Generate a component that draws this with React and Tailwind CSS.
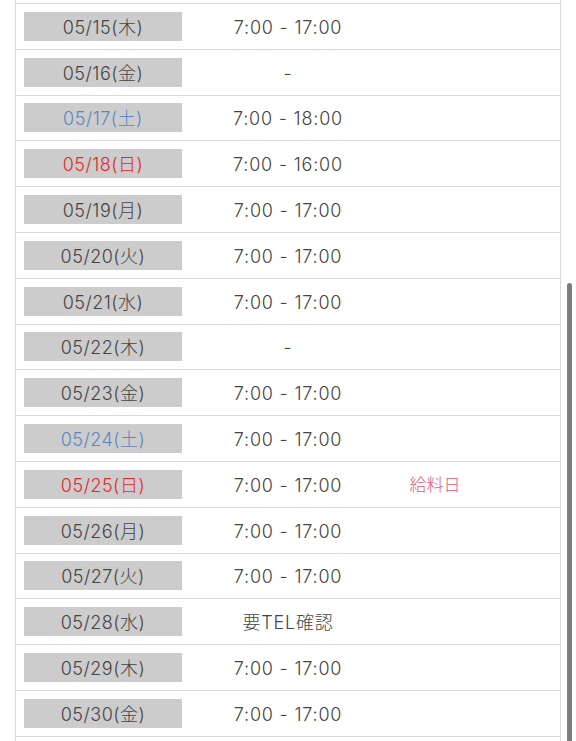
import React from "react";

const rows = [
  { d: "05/15(木)", t: "7:00 - 17:00" },
  { d: "05/16(金)", t: "-" },
  { d: "05/17(土)", t: "7:00 - 18:00", c: "blue" },
  { d: "05/18(日)", t: "7:00 - 16:00", c: "red" },
  { d: "05/19(月)", t: "7:00 - 17:00" },
  { d: "05/20(火)", t: "7:00 - 17:00" },
  { d: "05/21(水)", t: "7:00 - 17:00" },
  { d: "05/22(木)", t: "-" },
  { d: "05/23(金)", t: "7:00 - 17:00" },
  { d: "05/24(土)", t: "7:00 - 17:00", c: "blue" },
  { d: "05/25(日)", t: "7:00 - 17:00", c: "red", n: "給料日" },
  { d: "05/26(月)", t: "7:00 - 17:00" },
  { d: "05/27(火)", t: "7:00 - 17:00" },
  { d: "05/28(水)", t: "要TEL確認" },
  { d: "05/29(木)", t: "7:00 - 17:00" },
  { d: "05/30(金)", t: "7:00 - 17:00" },
];

export default function App() {
  return (
    <div
      className="relative w-[576px] h-[741px] overflow-hidden bg-white text-[#444444]"
      style={{ fontFamily: 'Inter, "Noto Sans CJK JP", sans-serif' }}
    >
      <div className="ml-[15px] w-[546px] border-x border-[#d9d9d9]">
        <div className="h-[3px]" />
        {rows.map((r) => (
          <div key={r.d} className="flex items-center h-[45.8px] border-t border-[#d9d9d9]">
            <div
              className={
                "ml-2 w-[158px] h-[29px] bg-[#cccccc] flex items-center justify-center pt-[3px] text-[18px] leading-none tracking-[0.5px] font-light " +
                (r.c === "blue" ? "text-[#5a86c8]" : r.c === "red" ? "text-[#e8262a]" : "text-[#444444]")
              }
            >
              {r.d}
            </div>
            <div className="ml-2 w-[196px] pt-[3px] text-center text-[18px] leading-none tracking-[0.8px] font-light">{r.t}</div>
            <div className="w-[98px] pt-[3px] text-center text-[17px] leading-none font-light text-[#e05a7e]">{r.n || ""}</div>
          </div>
        ))}
        <div className="h-[20px] border-t border-[#d9d9d9]" />
      </div>
      <div className="absolute left-[567px] top-[283px] w-[5px] h-[470px] rounded-full bg-[#7d7d7d]" />
    </div>
  );
}
